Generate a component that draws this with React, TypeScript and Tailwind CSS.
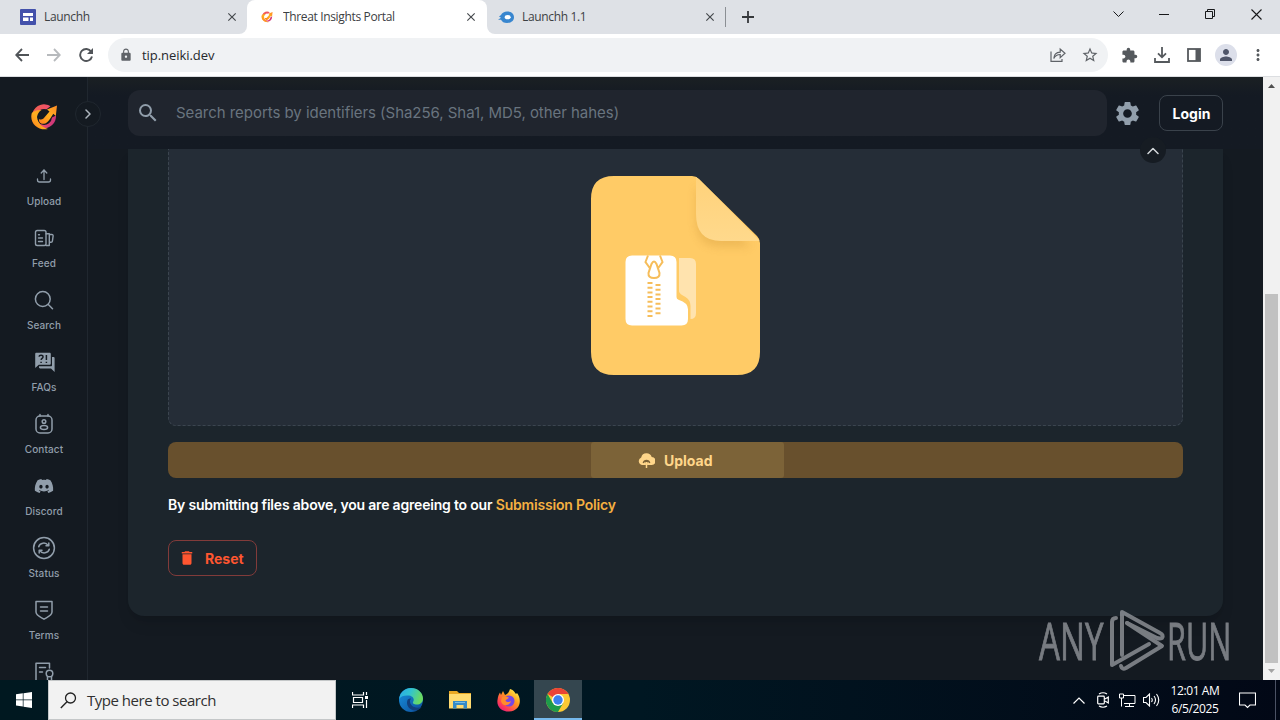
import type { ReactNode } from "react";
import { FaDiscord } from "react-icons/fa";
import {
  MdClose,
  MdDelete,
  MdExtension,
  MdLock,
  MdMoreVert,
  MdPerson,
  MdSearch,
  MdSettings,
  MdStarBorder,
} from "react-icons/md";

const line = {
  fill: "none",
  stroke: "currentColor",
  strokeWidth: 1.5,
  strokeLinecap: "round" as const,
  strokeLinejoin: "round" as const,
};

function NeikiLogo({ size, id }: { size: number; id: string }) {
  return (
    <svg className="shrink-0" width={size} height={size} viewBox="0 0 28 28">
      <defs>
        <linearGradient id={id + "-ring"} x1="0" y1="0.300" x2="1" y2="0.700">
          <stop offset="0" stopColor="#f0614f" />
          <stop offset="0.5" stopColor="#f0506a" />
          <stop offset="1" stopColor="#c8327c" />
        </linearGradient>
        <linearGradient id={id + "-arrow"} x1="0" y1="1" x2="1" y2="0">
          <stop offset="0" stopColor="#ff7a1c" />
          <stop offset="0.5" stopColor="#ffb020" />
          <stop offset="1" stopColor="#ff8a24" />
        </linearGradient>
      </defs>
      {/* ring, open at the upper right */}
      <path d="M20.500 3.200A12 12 0 1 0 26 12.500l-4 2A8 8 0 1 1 16.500 6.300Z" fill={`url(#${id}-ring)`} />
      <path d="M1.800 10C-1 20 8 28 18 26 12 24 8 21 7 14 7.500 11 9 8.500 11.500 7 7 6.500 3.500 8 1.800 10Z" fill={`url(#${id}-arrow)`} />
      {/* arrow */}
      <path d="M27 2.500 25.800 13l-2.500-2.200c-3 5-5.800 9.500-9.300 10-3.500.4-5.500-2-5-4.800 1 .8 3 .9 4.500-.5L19.500 8.500 17 6.500Z" fill={`url(#${id}-arrow)`} />
    </svg>
  );
}

function BrowserTab({ icon, title, width }: { icon: ReactNode; title: string; width: string }) {
  return (
    <div className={`flex h-[34px] items-center ${width}`}>
      {icon}
      <span className="flex-1 truncate text-[12px] tracking-[-0.35px] text-[#3c4043]">{title}</span>
      <MdClose className="size-[14px] text-[#45494d]" />
    </div>
  );
}

function TabStrip() {
  return (
    <div className="flex h-[34px] bg-white">
      <div className="w-[247px] rounded-br-lg bg-[#dee1e6]">
        <BrowserTab
          width="w-[239px] pl-5"
          title="Launchh"
          icon={
            <svg className="mr-2" width="16" height="16" viewBox="0 0 16 16">
              <rect width="16" height="16" rx="1" fill="#4351ab" />
              <path d="M3 4h10v3H3ZM3 8.500h5.500V12H3ZM10 8.500h3V12h-3Z" fill="#fff" />
            </svg>
          }
        />
      </div>
      <div className="w-[240px] bg-linear-to-b from-[#dee1e6] from-50% to-white to-50%">
        <div className="rounded-t-lg bg-white">
          <BrowserTab
            width="w-[231px] pl-[14px]"
            title="Threat Insights Portal"
            icon={<div className="mr-[10px]"><NeikiLogo size={12} id="fav" /></div>}
          />
        </div>
      </div>
      <div className="flex flex-1 items-center rounded-bl-lg bg-[#dee1e6]">
        <BrowserTab
          width="w-[230px] pl-[11px]"
          title="Launchh 1.1"
          icon={
            <svg className="mr-2" width="16" height="16" viewBox="0 0 16 16">
              <path d="M1 7.500 3 6c1-2 3.500-3.500 6-3.500 4 0 7 2.200 7 5.700S13 14 9 14c-3 0-5-1.300-6-3.300H0L3 8.800Z" fill="#3886cf" />
              <ellipse cx="9.700" cy="8.200" rx="3" ry="2.100" fill="#fff" />
            </svg>
          }
        />
        <div className="ml-[8px] h-5 w-px bg-[#8b8f94]" />
        <svg className="ml-4" width="12" height="12" viewBox="0 0 12 12">
          <path d="M6 0v12M0 6h12" stroke="#35383b" strokeWidth="1.800" />
        </svg>
        <div className="flex-1" />
        <div className="flex items-center pr-[18px] pb-[6px] text-[#17181a]">
          <svg className="mr-[35px]" width="11" height="7" viewBox="0 0 11 7"><path d="m.5.5 5 5 5-5" fill="none" stroke="currentColor" /></svg>
          <svg className="mr-[36px]" width="10" height="10" viewBox="0 0 10 10"><path d="M0 5.500h10" stroke="currentColor" /></svg>
          <svg className="mr-[36px]" width="10" height="10" viewBox="0 0 10 10"><path d="M.5 2.500h7v7h-7ZM2.500 2.500v-2h7v7h-2" fill="none" stroke="currentColor" /></svg>
          <svg width="11" height="11" viewBox="0 0 11 11"><path d="m.5.5 10 10m0-10-10 10" stroke="currentColor" strokeWidth="1.100" /></svg>
        </div>
      </div>
    </div>
  );
}

function Toolbar() {
  return (
    <div className="flex h-[43px] items-center border-b border-[#dcdee1] bg-white text-[#5f6368]">
      <svg className="ml-[15px]" width="14" height="14" viewBox="0 0 14 14"><path d="M14 7H1.500M7 1 1.200 7 7 13" fill="none" stroke="#505458" strokeWidth="1.800" /></svg>
      <svg className="ml-[18px]" width="14" height="14" viewBox="0 0 14 14"><path d="M0 7h12.500M7 1l5.800 6L7 13" fill="none" stroke="#b7babd" strokeWidth="1.800" /></svg>
      <svg className="ml-[18px]" width="14" height="14" viewBox="0 0 14 14"><path d="M12.200 3.700A6 6 0 1 0 13 8.500" fill="none" stroke="#505458" strokeWidth="1.900" /><path d="M14 0v6H8Z" fill="#505458" /></svg>
      <div className="ml-[15px] flex h-[34px] w-[1000px] items-center rounded-full bg-[#f0f2f4] pr-[9px] pl-[11px]">
        <MdLock className="size-[14px]" />
        <span className="mt-px ml-[9px] flex-1 text-[13px] tracking-[-0.05px] text-[#25282c]">tip.neiki.dev</span>
        <svg width="16" height="16" viewBox="0 0 16 16">
          <path d="M1 4.500v9.800h11V12M3.800 11.500C4 7.500 6 5.400 10.200 5.200V2L15 6.300l-4.800 4.300V7.500c-3 0-5 1.200-6.400 4Z" fill="none" stroke="currentColor" strokeWidth="1.200" />
        </svg>
        <MdStarBorder className="ml-[15px] size-[18px]" />
      </div>
      <MdExtension className="ml-[13px] size-[17px] text-[#55595d]" />
      <svg className="ml-4" width="16" height="16" viewBox="0 0 16 16"><path d="M8 0v10M4 6.300l4 4 4-4M1 11v4h14v-4" fill="none" stroke="#55595d" strokeWidth="1.800" /></svg>
      <svg className="ml-[17px]" width="14" height="14" viewBox="0 0 14 14"><rect x="1" y="1" width="12" height="12" fill="none" stroke="#55595d" strokeWidth="1.800" /><path d="M8.500 1H13v12H8.500Z" fill="#55595d" /></svg>
      <div className="ml-[14px] flex size-[22px] items-center justify-center rounded-full bg-[#dcdfea]">
        <MdPerson className="size-[18px] text-[#50566a]" />
      </div>
      <MdMoreVert className="ml-[12px] size-[18px] text-[#55595d]" />
    </div>
  );
}

const navItems: { label?: string; icon: ReactNode }[] = [
  {
    label: "Upload",
    icon: <g {...line} strokeWidth={1.3}><path d="M12 15.500V6m0 0L9.200 9M12 6l2.800 3M5.500 15v1c0 1.500.7 2 2 2h9c1.300 0 2-.5 2-2v-1" /></g>,
  },
  {
    label: "Feed",
    icon: (
      <g {...line} strokeWidth={1.4}>
        <rect x="3.500" y="4.500" width="10.500" height="15" rx="1.800" />
        <path d="M6.500 8.700h1M6.500 12h4M6.500 15.500h4M14 7.700h3.300v11.800H14M17.500 8.500h2.300c1 0 1.400.6 1.300 1.600l-.7 5c-.1.800-.6 1.200-1.400 1.200h-1.500" />
      </g>
    ),
  },
  { label: "Search", icon: <g {...line}><circle cx="10.800" cy="11" r="7.400" /><path d="m16.300 16.500 4.200 4.200" /></g> },
  {
    label: "FAQs",
    icon: (
      <g>
        <path d="M4.500 2.700h13c.8 0 1.300.5 1.300 1.300v9.500c0 .8-.5 1.300-1.300 1.300H6.800L3.200 18V4c0-.8.5-1.300 1.300-1.300Z" fill="currentColor" />
        <path d="M20 7h1.300c.9 0 1.300.5 1.300 1.300V22L19 18.500H8.200c-.8 0-1.200-.5-1.200-1.200V16.200h12c.7 0 1-.3 1-1Z" fill="currentColor" />
        <path d="M7 6.700c.3-2.200 4.200-2 4 .2 0 1.500-1.800 1.500-1.900 3M9.100 11.800v1.200M14.400 5v5M14.400 11.800v1.200" fill="none" stroke="#141a21" strokeWidth="1.500" />
      </g>
    ),
  },
  {
    label: "Contact",
    icon: (
      <g {...line}>
        <rect x="4" y="4" width="16" height="17" rx="4" />
        <path d="M8 2.500V4M16 2.500V4" /><circle cx="12" cy="9.500" r="1.800" />
        <ellipse cx="12" cy="15.500" rx="3.600" ry="2" />
      </g>
    ),
  },
  { label: "Discord", icon: <FaDiscord x={2} y={2} size={20} /> },
  {
    label: "Status",
    icon: (
      <g {...line}>
        <circle cx="12" cy="12" r="10.400" />
        <path d="M6.700 10.700c1-4 7-5 9.400-1.400M16.800 7v2.800H14M17.300 13.300c-1 4-7 5-9.400 1.400M7.200 17v-2.800H10" />
      </g>
    ),
  },
  {
    label: "Terms",
    icon: <g {...line}><path d="M4 3.500h16V14c0 3.500-4.500 5-8 7.200C8.500 19 4 17.500 4 14ZM8.500 9h7M8.500 13h7" /></g>,
  },
  {
    icon: (
      <g {...line}>
        <path d="M17.500 8V3.200H4v18h7M7.500 7.500h6M7.500 12h3" />
        <circle cx="17.500" cy="13.500" r="3.300" /><path d="M15.500 16.500V22l2-1.200 2 1.200v-5.500" />
      </g>
    ),
  },
];

function Sidebar() {
  return (
    <aside className="flex w-[88px] shrink-0 flex-col items-center border-r border-[#20272f] pt-[26px] pl-px">
      <NeikiLogo size={28} id="logo" />
      <nav className="mt-[33px] shrink-0">
        {navItems.map((item, index) => (
          <div key={index} className="flex h-[62px] flex-col items-center text-[#919eab]">
            <svg width="24" height="24" viewBox="0 0 24 24">{item.icon}</svg>
            {item.label && (
              <span className="mt-[5px] text-[10px] leading-4 font-medium tracking-[0.1px]">{item.label}</span>
            )}
          </div>
        ))}
      </nav>
    </aside>
  );
}

function SiteHeader() {
  return (
    <header className="flex h-[72px] shrink-0 items-center bg-linear-to-b from-[#1b2023] to-[#141a23] to-25% pr-10 pl-10">
      <div className="flex h-[46px] w-[979px] items-center rounded-xl bg-[#20252e] pl-2">
        <MdSearch className="size-6 text-[#919eab]" />
        <span className="ml-4 text-[15px] tracking-[-0.04px] text-[#69747f]">
          Search reports by identifiers (Sha256, Sha1, MD5, other hahes)
        </span>
      </div>
      <MdSettings className="ml-[6px] size-[29px] text-[#919eab]" />
      <button className="ml-auto h-9 w-16 rounded-lg border border-[#3a424b] pl-px text-[14px] font-bold text-white">Login</button>
    </header>
  );
}

function ZipFile() {
  return (
    <svg width="169" height="199" viewBox="0 0 169 199">
      <defs>
        <linearGradient id="fold" x1="0" y1="0" x2="0" y2="1">
          <stop offset="0" stopColor="#ffd27a" />
          <stop offset="1" stopColor="#ffd98c" />
        </linearGradient>
        <filter id="soft" x="-30%" y="-30%" width="160%" height="160%"><feGaussianBlur stdDeviation="4" /></filter>
        <clipPath id="page"><path d="M23 0h78q4 0 7 3l58 57q3 3 3 7v109q0 23-23 23H23q-23 0-23-23V23Q0 0 23 0Z" /></clipPath>
      </defs>
      <g clipPath="url(#page)">
        <path d="M0 0h169v199H0Z" fill="#ffcb66" />
        <path d="M105 10v36q0 25 25 25h30Z" fill="#c99236" opacity="0.3" filter="url(#soft)" />
        <path d="M105 0v38q0 27 25 27h39Z" fill="url(#fold)" />
      </g>
      <path d="M88 82h11q6 0 6 6v49q0 6-5.500 6V130q0-6-5-9-6-3-6.500-5.500Z" fill="#ffe3ae" />
      <path d="M41 79.500h38q6.500 0 6.500 6.500v35q0 2 2 2.700 9.500 3 9.500 9.500V143q0 6.500-6.500 6.500H41q-6.500 0-6.500-6.500V86q0-6.500 6.500-6.500Z" fill="#fff" />
      <path d="M57 79.500 54.500 86l5 7M69 79.500l2.500 6.500-5 7M60.500 88q2.500-5 5 0l3 9q.5 5-5.500 5t-5.500-5Z" fill="none" stroke="#f6bd5a" strokeWidth="2" />
      <path d="M59 106v35" stroke="#f6bd5a" strokeWidth="5" strokeDasharray="2 2.700" />
      <path d="M67 108v31" stroke="#f6bd5a" strokeWidth="5" strokeDasharray="2 2.700" />
    </svg>
  );
}

function UploadCard() {
  return (
    <section className="mx-10 h-[467px] rounded-b-2xl bg-[#1c252c] px-10 shadow-lg">
      <div className="flex h-[277px] justify-center rounded-b-lg border border-t-0 border-dashed border-[#3b454f] bg-[#252d37] pt-[27px]">
        <ZipFile />
      </div>
      <button className="mt-4 flex h-9 w-full overflow-hidden rounded-lg bg-[#68502d] text-[14px] font-bold text-[#ffd68a]">
        <span className="ml-[423px] flex h-full w-[193px] items-center justify-start rounded-[3px] bg-[#7c6338] pl-[47px]">
          <svg className="mr-[9px]" width="17" height="15" viewBox="0 0 17 15">
            <path d="M4 12A4 4 0 0 1 3.200 4.400 5.500 5.500 0 0 1 13.700 4a4 4 0 0 1-.5 8Z" fill="currentColor" />
            <path d="M8.500 15V7.500M5.200 10a3.400 3.400 0 0 1 6.600 0M6.700 9.300l1.800-1.800 1.800 1.800" fill="none" stroke="#7c6338" strokeWidth="1.200" />
            <path d="M8.500 9v6" stroke="currentColor" strokeWidth="1.500" />
          </svg>
          Upload
        </span>
      </button>
      <p className="mt-4 text-[14px] leading-[22px] font-semibold tracking-[-0.19px] text-white">
        By submitting files above, you are agreeing to our <span className="text-[#f5b041]">Submission Policy</span>
      </p>
      <button className="mt-6 flex h-9 w-[89px] items-center rounded-lg border border-[#813b3a] pl-[9px] text-[14px] font-bold text-[#ff5630]">
        <MdDelete className="mr-[9px] size-[18px]" />
        Reset
      </button>
    </section>
  );
}

function Watermark() {
  return (
    <svg className="absolute top-[520px] left-[1032px] opacity-70" width="208" height="83" viewBox="-4 -10 208 83">
      <g fill="#a3a6ab" stroke="#a3a6ab" strokeWidth="0.900" fontFamily="'Open Sans', 'Noto Sans', sans-serif" fontSize="51">
        <text transform="translate(3 53) scale(0.65 1)">ANY</text>
        <text transform="translate(131 53) scale(0.6 1)">RUN</text>
      </g>
      <g transform="translate(0 2)" fill="none" stroke="#a3a6ab" strokeWidth="4" strokeLinejoin="round" strokeLinecap="round">
        <path d="M80 9q-4 0-4 4v43l37-21" />
        <path d="M86 46V3l38 21q4 2 2 5-2 1-5 0L91 14" />
        <path d="M91 14l35 23-36 22q-4 2-5-2" />
      </g>
    </svg>
  );
}

function Scrollbar() {
  return (
    <div className="flex w-[17px] shrink-0 flex-col items-center bg-[#f1f1f1]">
      <svg className="mt-[6px]" width="7" height="5" viewBox="0 0 7 5"><path d="M0 5h7L3.500 1Z" fill="#505050" /></svg>
      <div className="mt-[206px] h-[369px] w-[13px] bg-[#c1c1c1]" />
      <svg className="mt-[6px]" width="7" height="5" viewBox="0 0 7 5"><path d="M0 0h7L3.500 4Z" fill="#a3a3a3" /></svg>
    </div>
  );
}

function EdgeIcon() {
  return (
    <svg width="24" height="24" viewBox="0 0 24 24">
      <defs>
        <linearGradient id="edge-top" x1="0" y1="0" x2="1" y2="0.300"><stop offset="0" stopColor="#2ba9e8" /><stop offset="0.500" stopColor="#31c3d0" /><stop offset="1" stopColor="#69da62" /></linearGradient>
        <linearGradient id="edge-low" x1="0" y1="0" x2="1" y2="1"><stop offset="0" stopColor="#1892df" /><stop offset="1" stopColor="#0c4c99" /></linearGradient>
      </defs>
      <circle cx="12" cy="12" r="12" fill="url(#edge-low)" />
      <path d="M.2 11C1 4 6 0 12 0c7 0 12 5 12 10.500 0 4-3 6-6 6-3.500 0-4.500-1.500-4-2.500 2-2.500 0-6-4-6.500C6 7 1.500 8 .2 11Z" fill="url(#edge-top)" />
      <path d="M8.500 12c-2 5 2 10.500 8 10.500 2 0 4.500-1.500 6-3.500-7 2.500-12-2-11.500-6.500l1-2c-1.500 0-3 .5-3.500 1.500Z" fill="#123f7c" />
    </svg>
  );
}

function FirefoxIcon() {
  return (
    <svg width="24" height="24" viewBox="0 0 24 24">
      <defs>
        <linearGradient id="ff" x1="1" y1="0" x2="0.200" y2="1"><stop offset="0.100" stopColor="#fff04a" /><stop offset="0.450" stopColor="#ff9a1f" /><stop offset="0.800" stopColor="#ff3f54" /><stop offset="1" stopColor="#e3197d" /></linearGradient>
      </defs>
      <path d="M13 1c4 1 5 4 6 5l1-1c5 6 4 18-8 18.500C4 23.500-.5 18 .5 12 1 8 2 6 3 4.500l1 2.500L6 3l2 4c3-1 4-3 5-6Z" fill="url(#ff)" />
      <circle cx="12" cy="13" r="5.500" fill="#7547e6" />
      <path d="M5 9c3-2 5 0 7 .5-1 2-3 1.500-3.500 3 1 2 4 2 5.500.5-1 5-9 6-10 0Z" fill="#ff8c2b" />
    </svg>
  );
}

function ChromeIcon() {
  return (
    <svg width="24" height="24" viewBox="0 0 24 24">
      <circle cx="12" cy="12" r="12" fill="#fcc934" />
      <path d="M12 12 1.600 6A12 12 0 0 1 22.400 6H12Z" fill="#ea4335" />
      <path d="M1.600 6 6.800 15 12 12l5.200 3-5.200 9A12 12 0 0 1 1.600 6Z" fill="#1e9b4b" />
      <circle cx="12" cy="12" r="6" fill="#fff" />
      <circle cx="12" cy="12" r="4.700" fill="#3b80ed" />
    </svg>
  );
}

function Taskbar() {
  return (
    <footer className="flex h-10 items-center bg-linear-to-r from-[#001820] via-[#001722] to-[#020816] text-white">
      <div className="flex w-12 justify-center">
        <svg width="16" height="16" viewBox="0 0 16 16"><path d="M0 2.300 6.800 1.300v6.200H0ZM7.500 1.200 16 0v7.500H7.500ZM0 8.300h6.800v6.200L0 13.500ZM7.500 8.300H16V16l-8.500-1.300Z" fill="#fff" /></svg>
      </div>
      <div className="flex h-10 w-72 items-center border border-[#c4c7c8] bg-[#f2f2f2] pl-[11px]">
        <svg width="17" height="17" viewBox="0 0 17 17"><circle cx="10.500" cy="6" r="5" fill="none" stroke="#222" strokeWidth="1.300" /><path d="M7 9.700.8 16" stroke="#222" strokeWidth="1.400" /></svg>
        <span className="ml-[10px] text-[15px] tracking-[-0.48px] text-[#303030]">Type here to search</span>
      </div>
      <div className="flex w-12 justify-center">
        <svg width="17" height="16" viewBox="0 0 17 16"><path d="M.5 0v3h11V0M.5 16v-3h11v3M1.500 5.500h9v5h-9ZM14.500 0v3M14.500 8v8" fill="none" stroke="#fff" strokeWidth="1.200" /><path d="M13 4h3v3h-3Z" fill="#fff" /></svg>
      </div>
      <div className="ml-[3px] flex w-12 justify-center"><EdgeIcon /></div>
      <div className="ml-[1px] flex w-12 justify-center">
        <svg width="22" height="18" viewBox="0 0 22 18">
          <path d="M0 0h8l2 2h12v15H0Z" fill="#e9a823" /><path d="M0 3h22v14.500H0Z" fill="#ffdb70" />
          <path d="M4 17.500V10h14v7.500h-3.500V14h-7v3.500Z" fill="#348bc8" /><path d="M6 11.500h10" stroke="#77bce5" />
        </svg>
      </div>
      <div className="ml-[1px] flex w-12 justify-center"><FirefoxIcon /></div>
      <div className="ml-[1px] flex h-10 w-12 items-center justify-center border-b-2 border-[#76b9ed] bg-[#34464f] pt-[2px]"><ChromeIcon /></div>
      <div className="flex-1" />
      <svg width="12" height="7" viewBox="0 0 12 7"><path d="m.5 6.500 5.500-5.500 5.500 5.500" fill="none" stroke="#fff" strokeWidth="1.200" /></svg>
      <svg className="ml-[12px]" width="12" height="16" viewBox="0 0 12 16"><path d="M2 2q4-2.500 8 0M2 14q4 2.500 8 0M.7 5q0-.8.8-.8h5q.8 0 .8.800v6q0 .8-.8.800h-5q-.8 0-.8-.8ZM8 7l3.300-2v6L8 9" fill="none" stroke="#fff" strokeWidth="1.200" /></svg>
      <svg className="ml-[10px]" width="17" height="15" viewBox="0 0 17 15"><path d="M5 2.500h11v8H5M10.500 10.500v3M6 13.500h9M.5 1h4v4h-4ZM2.500 5v8.500" fill="none" stroke="#fff" /></svg>
      <svg className="ml-[7px]" width="17" height="14" viewBox="0 0 17 14"><path d="M.5 4.500H3L6.500 1v12L3 9.500H.5ZM8.500 5q1.500 2 0 4M11 3q3 4 0 8M13.500 1q4.500 6 0 12" fill="none" stroke="#fff" strokeWidth="1.100" /></svg>
      <div className="ml-[8px] w-[54px] text-center text-[12px] leading-[18px] tracking-[-0.4px] whitespace-nowrap">
        <div>12:01 AM</div>
        <div>6/5/2025</div>
      </div>
      <svg className="ml-[17px]" width="17" height="17" viewBox="0 0 17 17"><path d="M.5 1h16v12H11l-2.500 2.500L6 13H.5Z" fill="none" stroke="#fff" strokeWidth="1.100" /></svg>
      <div className="ml-[19px] h-10 w-px bg-[#4b5264]" />
      <div className="w-1" />
    </footer>
  );
}

export default function App() {
  return (
    <div className="flex h-[720px] w-[1280px] flex-col overflow-hidden bg-[#141a21] font-['Open_Sans','Noto_Sans',sans-serif]">
      <TabStrip />
      <Toolbar />
      <div className="relative flex h-[603px] overflow-hidden font-['Inter','Liberation_Sans',sans-serif]">
        <Sidebar />
        <main className="flex min-w-0 flex-1 flex-col">
          <SiteHeader />
          <UploadCard />
        </main>
        <Scrollbar />

        {/* Sidebar toggle */}
        <div className="absolute top-[24px] left-[75px] flex size-[26px] items-center justify-center rounded-full border border-[#20272f] bg-[#141a21]">
          <svg width="6" height="10" viewBox="0 0 6 10"><path d="m1 1 4 4-4 4" {...line} stroke="#aeb6be" /></svg>
        </div>
        {/* Remove file */}
        <div className="absolute top-[60px] left-[1140px] flex size-[26px] items-center justify-center rounded-full bg-[#161c23]">
          <svg className="mt-[2px]" width="12" height="8" viewBox="0 0 12 8"><path d="m1 6.500 5-5 5 5" {...line} stroke="#d3d7db" /></svg>
        </div>
        <Watermark />
      </div>
      <Taskbar />
    </div>
  );
}
